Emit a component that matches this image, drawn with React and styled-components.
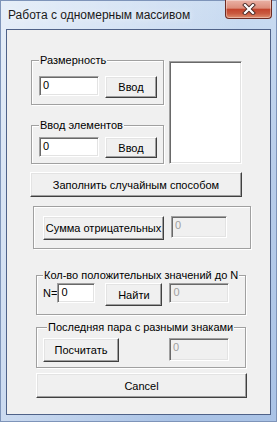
import React from "react";
import styled, { createGlobalStyle } from "styled-components";

const Global = createGlobalStyle`
  html, body { margin: 0; padding: 0; }
  body { width: 277px; height: 422px; overflow: hidden; background: #bcd2ee; }
  * { box-sizing: border-box; }
`;

const Window = styled.div`
  width: 277px;
  height: 422px;
  display: flex;
  flex-direction: column;
  background:
    linear-gradient(100deg, rgba(255,255,255,0.55) 0%, rgba(255,255,255,0.25) 40%, rgba(255,255,255,0) 70%),
    linear-gradient(180deg, #c9dbf1 0%, #b8cdea 40%, #aac3e6 100%);
  border: 1px solid #7e94b9;
  font-family: "Liberation Sans", Arial, sans-serif;
`;

const TitleBar = styled.div`
  height: 28px;
  display: flex;
  align-items: flex-start;
  justify-content: space-between;
  padding-left: 7px;
`;

const Title = styled.div`
  margin-top: 7px;
  font-family: "Liberation Sans", Arial, sans-serif;
  font-size: 12px;
  color: #1a1a1a;
  text-shadow: 0 0 6px rgba(255,255,255,0.9);
`;

const CloseBtn = styled.div`
  width: 47px;
  height: 19px;
  margin-top: -1px;
  margin-right: 4px;
  border: 1px solid #6e2b22;
  border-top: none;
  border-radius: 0 0 4px 4px;
  background: linear-gradient(180deg, #eab2a6 0%, #dc8d7b 45%, #c3452e 52%, #c95a40 75%, #de8f6f 100%);
  box-shadow: inset 0 0 0 1px rgba(255,255,255,0.35);
  display: flex;
  align-items: center;
  justify-content: center;
`;

const Client = styled.div`
  flex: 1;
  margin: 0 5px 6px 5px;
  border: 1px solid #4f6288;
  background: #f0f0f0;
  display: flex;
  flex-direction: column;
  align-items: flex-start;
  font-size: 11px;
  color: #000;
`;

const TopRow = styled.div`
  display: flex;
  align-items: flex-start;
  gap: 5px;
  margin: 30px 0 0 24px;
`;

const Column = styled.div`
  display: flex;
  flex-direction: column;
  gap: 20px;
`;

const Group = styled.div`
  position: relative;
  width: ${(p) => p.$w}px;
  height: ${(p) => p.$h}px;
  margin: ${(p) => p.$m || "0"};
  border: 1px solid #a0a0a0;
  box-shadow: inset 1px 1px 0 #fff, 1px 1px 0 #fff;
  display: flex;
  align-items: flex-start;
  padding: ${(p) => p.$pad};
`;

const Legend = styled.span`
  position: absolute;
  top: -8px;
  left: ${(p) => p.$left}px;
  padding: 0 1px;
  background: #f0f0f0;
  line-height: 14px;
  white-space: nowrap;
`;

const Edit = styled.div`
  width: ${(p) => p.$w}px;
  height: ${(p) => p.$h}px;
  margin-left: ${(p) => p.$ml || 0}px;
  background: ${(p) => (p.$disabled ? "#f0f0f0" : "#fff")};
  color: ${(p) => (p.$disabled ? "#a0a0a0" : "#000")};
  border: 1px solid;
  border-color: #a0a0a0 #fff #fff #a0a0a0;
  box-shadow: inset 1px 1px 0 #696969, inset -1px -1px 0 #e3e3e3;
  padding: 2px 0 0 3px;
  line-height: 13px;
  flex-shrink: 0;
`;

const Button = styled.div`
  width: ${(p) => p.$w}px;
  height: ${(p) => p.$h}px;
  margin: ${(p) => p.$m || "0"};
  background: #f0f0f0;
  border: 1px solid;
  border-color: #fff #404040 #404040 #fff;
  box-shadow: inset -1px -1px 0 #a0a0a0, inset 1px 1px 0 #e3e3e3;
  display: flex;
  align-items: center;
  justify-content: center;
  white-space: nowrap;
  flex-shrink: 0;
  font-size: ${(p) => p.$fs || 11}px;
`;

const ListBox = styled.div`
  width: 73px;
  height: 103px;
  margin-top: 1px;
  background: #fff;
  border: 1px solid;
  border-color: #a0a0a0 #fff #fff #a0a0a0;
  box-shadow: inset 1px 1px 0 #696969, inset -1px -1px 0 #e3e3e3;
`;

const NLabel = styled.span`
  margin-top: 4px;
  line-height: 13px;
`;

export default function App() {
  return (
    <>
      <Global />
      <Window>
        <TitleBar>
          <Title>Работа с одномерным массивом</Title>
          <CloseBtn>
            <svg width="14" height="12" viewBox="0 0 14 12">
              <path d="M3 2 L11 10 M11 2 L3 10" stroke="#4a2a26" strokeWidth="4" strokeLinecap="square" />
              <path d="M3 2 L11 10 M11 2 L3 10" stroke="#fff" strokeWidth="2.2" strokeLinecap="square" />
            </svg>
          </CloseBtn>
        </TitleBar>
        <Client>
          <TopRow>
            <Column>
              <Group $w={133} $h={45} $pad="15px 0 0 7px">
                <Legend $left={7}>Размерность</Legend>
                <Edit $w={60} $h={20}>0</Edit>
                <Button $w={52} $h={22} $m="0 0 0 6px">Ввод</Button>
              </Group>
              <Group $w={133} $h={39} $pad="11px 0 0 7px">
                <Legend $left={7}>Ввод элементов</Legend>
                <Edit $w={60} $h={20}>0</Edit>
                <Button $w={52} $h={21} $m="0 0 0 6px">Ввод</Button>
              </Group>
            </Column>
            <ListBox />
          </TopRow>
          <Button $w={212} $h={25} $m="8px 0 0 23px">Заполнить случайным способом</Button>
          <Group $w={218} $h={43} $m="9px 0 0 26px" $pad="9px 0 0 9px">
            <Button $w={121} $h={24}>Сумма отрицательных</Button>
            <Edit $w={56} $h={22} $ml={7} $disabled>0</Edit>
          </Group>
          <Group $w={210} $h={40} $m="26px 0 0 29px" $pad="7px 0 0 6px">
            <Legend $left={6}>Кол-во положительных значений до N</Legend>
            <NLabel>N=</NLabel>
            <Edit $w={38} $h={20}>0</Edit>
            <Button $w={57} $h={23} $m="0 0 0 10px">Найти</Button>
            <Edit $w={60} $h={20} $ml={7} $disabled>0</Edit>
          </Group>
          <Group $w={210} $h={41} $m="12px 0 0 29px" $pad="10px 0 0 6px">
            <Legend $left={10}>Последняя пара с разными знаками</Legend>
            <Button $w={76} $h={24}>Посчитать</Button>
            <Edit $w={60} $h={23} $ml={50} $disabled>0</Edit>
          </Group>
          <Button $w={211} $h={25} $m="5px 0 0 29px">Cancel</Button>
        </Client>
      </Window>
    </>
  );
}
